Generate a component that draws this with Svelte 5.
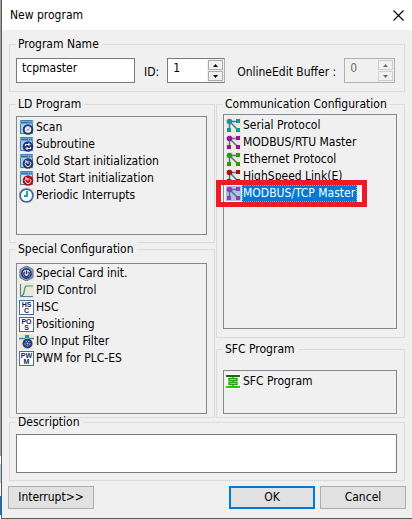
<script>
  let name = $state('tcpmaster');
  let id = $state(1);
  let buffer = $state(0);
  let description = $state('');
  let selected = $state('MODBUS/TCP Master');

  const ldPrograms = [
    { label: 'Scan', icon: 'scan' },
    { label: 'Subroutine', icon: 'sub' },
    { label: 'Cold Start initialization', icon: 'cold' },
    { label: 'Hot Start initialization', icon: 'hot' },
    { label: 'Periodic Interrupts', icon: 'clock' }
  ];
  const specials = [
    { label: 'Special Card init.', icon: 'card' },
    { label: 'PID Control', icon: 'pid' },
    { label: 'HSC', icon: 'text', lines: ['HS', 'C'] },
    { label: 'Positioning', icon: 'text', lines: ['PO', 'S'] },
    { label: 'IO Input Filter', icon: 'filter' },
    { label: 'PWM for PLC-ES', icon: 'text', lines: ['PW', 'M'] }
  ];
  const communications = [
    { label: 'Serial Protocol', icon: 'net', color: '#0d9a94' },
    { label: 'MODBUS/RTU Master', icon: 'net', color: '#a010a0' },
    { label: 'Ethernet Protocol', icon: 'net', color: '#2c9a08' },
    { label: 'HighSpeed Link(E)', icon: 'net', color: '#a80c1c' },
    { label: 'MODBUS/TCP Master', icon: 'net', color: '#9838b8', marked: true }
  ];
  const sfcPrograms = [{ label: 'SFC Program', icon: 'sfc' }];
</script>

{#snippet icon(item)}
  <svg class="icon" viewBox="0 0 15 15" aria-hidden="true">
    {#if item.icon === 'net'}
      <rect width="15" height="15" fill={item.label === selected ? '#a9c4dc' : '#ebe9d8'} />
      <path d="M3.5 3.5H12M3.5 3.5V12M3.5 3.5L12 12" stroke="#53739a" stroke-width="1.5" fill="none" />
      <circle cx="3.5" cy="3.5" r="2.8" fill={item.color} />
      <path d="M10 1h4v4h-4zM1 10h4v4H1zM10 10h4v4h-4z" fill={item.color} />
    {:else if item.icon === 'sfc'}
      <rect width="15" height="15" fill="#fff" />
      <path d="M0 1h14v2H0z" fill="#176b18" />
      <path d="M0 12h14v2H0z" fill="#2fc20b" />
      <path d="M7 3v1M7 7v1M7 11v1M3 4.5h8v2H3zM3 8.5h8v2H3z" stroke="#2d9e18" stroke-width="1.4" fill="none" />
    {:else if item.icon === 'clock'}
      <rect width="15" height="15" fill="#ebe9d8" />
      <circle cx="7.5" cy="7.5" r="6.4" fill="#fff" stroke="#416aa3" stroke-width="1.8" />
      <path d="M8 3v5H5" stroke="#10a292" stroke-width="1.8" fill="none" />
    {:else if item.icon === 'card'}
      <rect width="15" height="15" fill="#ebe9d8" />
      <path d="M7.5 0L14 3.5v8L7.5 15L1 11.5v-8z" fill="#8ba7c8" stroke="#54779f" />
      <circle cx="7.5" cy="7.5" r="4.6" fill="#d8e1ee" stroke="#29336c" stroke-width="1.6" />
      <path d="M5.6 6a2.7 2.7 0 1 0 3.8 0M7.5 4.5v3.5" stroke="#29336c" stroke-width="1.4" fill="none" />
    {:else if item.icon === 'pid'}
      <rect width="15" height="15" fill="#e6e9d8" />
      <path d="M1.5 1v12.5H14" stroke="#6a72a2" fill="none" />
      <path d="M2 13c3 0 3-4 4-9l1-1h7" stroke="#3f9370" stroke-width="1.2" fill="none" />
    {:else if item.icon === 'text'}
      <rect x="0.5" y="0.5" width="14" height="14" fill="#fff" stroke="#4b6c98" />
      <text class="glyph" x="7.5" y="7" text-anchor="middle">{item.lines[0]}</text>
      <text class="glyph" x="7.5" y="13" text-anchor="middle">{item.lines[1]}</text>
    {:else if item.icon === 'filter'}
      <rect width="15" height="15" fill="#ebe9d8" />
      <path d="M0 4.5h6M10 4.5h5" stroke="#3a83bd" stroke-width="1.6" />
      <path d="M6 1h4v3H6z" fill="#21978b" />
      <circle cx="8.5" cy="9.5" r="5" fill="#263979" />
      <circle cx="8.5" cy="9.5" r="2.5" fill="none" stroke="#b5c8e5" stroke-dasharray="2 1" />
      <circle cx="8.5" cy="9.5" r="1" fill="#b5c8e5" />
    {:else}
      <rect width="15" height="15" fill="#ebe9d8" />
      <path d="M1.5 .5h12v13h-12z" fill={item.icon === 'hot' ? '#e3dfe2' : '#a7cdec'} stroke="#4680b2" />
      <path d="M1 1h13v3H1z" fill="#6ba3d0" />
      <path d="M2 2.5h7M10 2.5h1M12 2.5h1" stroke="#2f6ca3" />
      <circle cx="9" cy="9.5" r="5.3" fill={item.icon === 'hot' ? '#b30c19' : '#283775'} />
      {#if item.icon === 'scan'}
        <circle cx="9" cy="9.5" r="3.2" fill="#fff" />
        <path d="M7 7.5l4 4M11 7.5l-4 4" stroke="#283775" stroke-dasharray="1 1" />
      {:else if item.icon === 'sub'}
        <path d="M6.5 9V7.5h4M9.5 6l1.5 1.5L9.5 9M11.5 10v1.5h-4M8.5 10L7 11.5 8.5 13" stroke="#fff" fill="none" />
      {:else}
        <path d="M7.3 7.5a2.8 2.8 0 1 0 3.4 0M9 10V7M6 7h2v2" stroke="#e8edf6" fill="none" />
      {/if}
    {/if}
  </svg>
{/snippet}

{#snippet list(items, label)}
  <ul class="list" aria-label={label}>
    {#each items as item}
      <li class:marked={item.marked}>
        <button
          type="button"
          class="item"
          class:selected={item.label === selected}
          aria-pressed={item.label === selected}
          onclick={() => (selected = item.label)}
        >
          {@render icon(item)}
          <span>{item.label}</span>
        </button>
      </li>
    {/each}
  </ul>
{/snippet}

{#snippet arrows(disabled, step)}
  <span class="arrows">
    <button type="button" aria-label="Increase" {disabled} onclick={() => step(1)}>
      <svg viewBox="0 0 5 3" aria-hidden="true"><path d="M0 3L2.5 0L5 3z" /></svg>
    </button>
    <button type="button" aria-label="Decrease" {disabled} onclick={() => step(-1)}>
      <svg viewBox="0 0 5 3" aria-hidden="true"><path d="M0 0L2.5 3L5 0z" /></svg>
    </button>
  </span>
{/snippet}

<div class="desktop">
  <main class="dialog">
    <header>
      <h1>New program</h1>
      <button type="button" class="close" aria-label="Close">
        <svg viewBox="0 0 11 11" aria-hidden="true"><path d="M.5 .5l10 10M10.5 .5l-10 10" /></svg>
      </button>
    </header>

    <form onsubmit={(event) => event.preventDefault()}>
      <fieldset class="program">
        <legend>Program Name</legend>
        <div class="fields">
          <input class="name" type="text" aria-label="Program Name" bind:value={name} />
          <label for="program-id">ID:</label>
          <div class="spinner">
            <input id="program-id" type="text" inputmode="numeric" bind:value={id} />
            {@render arrows(false, (n) => (id = Number(id) + n))}
          </div>
          <label class="buffer-label" for="buffer">OnlineEdit Buffer :</label>
          <div class="spinner off">
            <input id="buffer" type="text" inputmode="numeric" disabled bind:value={buffer} />
            {@render arrows(true, (n) => (buffer += n))}
          </div>
        </div>
      </fieldset>

      <div class="columns">
        <div class="column">
          <fieldset class="ld">
            <legend>LD Program</legend>
            {@render list(ldPrograms, 'LD Program')}
          </fieldset>
          <fieldset class="special">
            <legend>Special Configuration</legend>
            {@render list(specials, 'Special Configuration')}
          </fieldset>
        </div>
        <div class="column">
          <fieldset class="communication">
            <legend>Communication Configuration</legend>
            {@render list(communications, 'Communication Configuration')}
          </fieldset>
          <fieldset class="sfc">
            <legend>SFC Program</legend>
            {@render list(sfcPrograms, 'SFC Program')}
          </fieldset>
        </div>
      </div>

      <fieldset class="description">
        <legend>Description</legend>
        <textarea aria-label="Description" bind:value={description}></textarea>
      </fieldset>

      <footer>
        <button type="button" class="push interrupt">Interrupt&gt;&gt;</button>
        <button type="submit" class="push primary">OK</button>
        <button type="button" class="push">Cancel</button>
      </footer>
    </form>
  </main>
</div>

<style>
  :global(body) {
    margin: 0;
    background: #f0f0f0;
  }

  .desktop {
    padding-left: 1px;
    background: linear-gradient(
      #a0a0a0 456px,
      #fff 456px 464px,
      #b9cbe0 464px 483px,
      #f4f4f4 483px 496px,
      #0078d7 496px 515px,
      #fff 515px
    );
    font: 12px/17px "DejaVu Sans Condensed", "DejaVu Sans", sans-serif;
    color: #000;
  }

  .desktop * {
    box-sizing: border-box;
  }

  .dialog {
    border: solid #5a5a5a;
    border-width: 0 0 1px 1px;
    background: #f0f0f0;
  }

  button,
  input,
  textarea {
    margin: 0;
    font: inherit;
    color: inherit;
  }

  header {
    display: flex;
    align-items: center;
    justify-content: space-between;
    height: 30px;
    padding: 0 8px;
    background: #fff;
  }

  h1 {
    margin: 0;
    font: inherit;
  }

  .close {
    display: flex;
    padding: 0;
    border: 0;
    background: none;
  }

  .close svg {
    width: 11px;
    height: 11px;
    stroke: #000;
    stroke-width: 1.1;
  }

  form {
    padding: 6px 7px 9px;
  }

  fieldset {
    min-width: 0;
    margin: 0;
    padding: 5px 7px 8px 6px;
    border: 1px solid #dcdcdc;
  }

  legend {
    height: 17px;
    padding: 0 3px 0 2px;
    background: #f0f0f0;
    white-space: nowrap;
  }

  .fields {
    display: flex;
    height: 25px;
  }

  .name,
  .spinner,
  textarea {
    border: 1px solid #7a7a7a;
    border-radius: 0;
    background: #fff;
  }

  .name {
    flex: 0 1 119px;
    min-width: 0;
    padding: 0 5px 4px;
  }

  .fields label {
    padding: 6px 8px 0 9px;
    white-space: nowrap;
  }

  .fields .buffer-label {
    padding-left: 12px;
  }

  .spinner {
    display: flex;
    width: 58px;
    border-right-color: #adb2b5;
  }

  .spinner input {
    flex: 1;
    min-width: 0;
    padding: 0 5px 4px;
    border: 0;
    background: none;
  }

  .spinner.off {
    width: 51px;
    border-color: #adb2b5;
    color: #6d6d6d;
    background: #f0f0f0;
  }

  .arrows {
    display: flex;
    flex-direction: column;
    gap: 1px;
    width: 17px;
    padding: 1px;
    background: #f0f0f0;
  }

  .arrows button {
    display: flex;
    flex: 1;
    align-items: center;
    justify-content: center;
    padding: 0;
    border: 1px solid #acacac;
    background: #f0f0f0;
  }

  .off .arrows button {
    border-color: #cfcfcf;
  }

  .arrows svg {
    width: 5px;
    height: 3px;
  }

  .off .arrows svg {
    fill: #6d6d6d;
  }

  .columns {
    display: grid;
    grid-template-columns: 206fr 189fr;
    gap: 1px;
    margin-top: 4px;
  }

  .column {
    display: flex;
    flex-direction: column;
    min-width: 0;
  }

  .list {
    min-height: 100%;
    margin: 0;
    padding: 2px;
    border: 1px solid #828790;
    list-style: none;
  }

  .ld {
    padding-top: 3px;
    padding-bottom: 7px;
  }

  .ld .list {
    min-height: 119px;
  }

  .special {
    margin-top: -2px;
    padding-bottom: 3px;
  }

  .special .list {
    min-height: 151px;
    padding-top: 1px;
  }

  .communication {
    padding-top: 1px;
  }

  .communication .list {
    min-height: 215px;
  }

  .sfc {
    margin-top: 3px;
    padding-top: 12px;
    padding-bottom: 3px;
  }

  .sfc .list {
    min-height: 44px;
  }

  .item {
    display: flex;
    gap: 1px;
    height: 17px;
    padding: 0;
    border: 0;
    background: none;
    white-space: nowrap;
  }

  .item span {
    padding: 0 2px 0 1px;
    line-height: 17px;
  }

  .selected span {
    outline: 1px dotted #ff8728;
    outline-offset: -1px;
    color: #fff;
    background: #0078d7;
  }

  .icon {
    flex: none;
    width: 15px;
    height: 15px;
    margin-top: 1px;
  }

  .glyph {
    font: bold 7px "Liberation Sans", sans-serif;
    fill: #171c58;
  }

  .marked {
    position: relative;
    width: fit-content;
  }

  /* frame drawn over the row and the edge of its list */
  .marked::after {
    content: "";
    position: absolute;
    inset: -5px -10px -5px -10px;
    border: 5px solid #ed1c24;
    box-shadow: inset 1px 0 #fff, inset -2px 0 #fff;
    pointer-events: none;
  }

  .description {
    margin-top: -4px;
    padding-top: 3px;
    padding-bottom: 7px;
  }

  textarea {
    display: block;
    width: 100%;
    height: 39px;
    padding: 2px 5px;
    resize: none;
  }

  footer {
    display: flex;
    gap: 5px;
    margin: 5px -1px 0;
  }

  .push {
    width: 86px;
    height: 23px;
    padding: 0;
    border: 1px solid #adadad;
    background: #e1e1e1;
  }

  .primary {
    border: 2px solid #0078d7;
  }

  .interrupt {
    margin-right: auto;
  }
</style>
